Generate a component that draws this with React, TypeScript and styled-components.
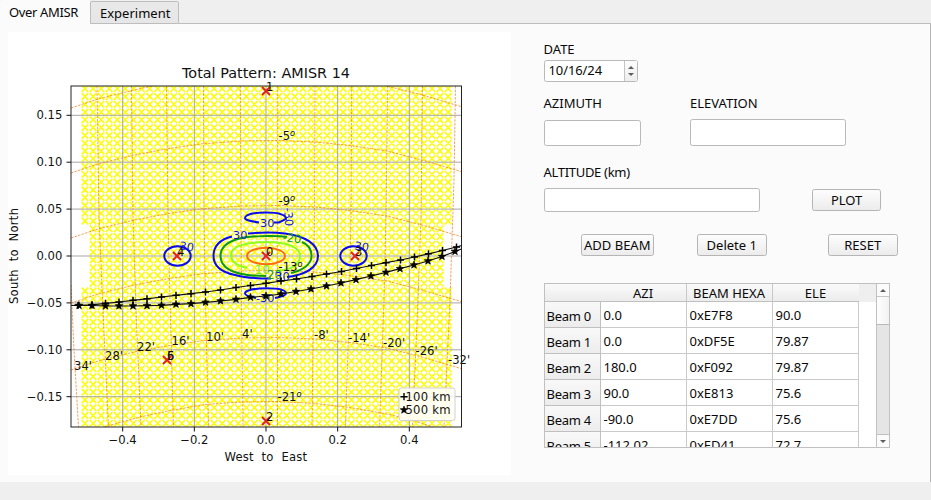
import React from "react";
import styled, { createGlobalStyle } from "styled-components";

const Global = createGlobalStyle`
  *{box-sizing:border-box}
  html,body{margin:0;padding:0;background:#efefef;overflow:hidden}
  body{font-family:"Noto Sans","Open Sans",sans-serif;font-size:13px;color:#080808}
`;

const Window = styled.div`
  width: 931px;
  height: 500px;
  display: flex;
  flex-direction: column;
  background: #efefef;
`;
const TabBar = styled.div`
  display: flex;
  height: 24px;
  flex: none;
  align-items: flex-end;
`;
const Tab = styled.div<{ $active?: boolean }>`
  width: ${(p) => (p.$active ? 90 : 89)}px;
  height: ${(p) => (p.$active ? 24 : 23)}px;
  padding-left: 9px;
  line-height: ${(p) => (p.$active ? 24 : 22)}px;
  letter-spacing: ${(p) => (p.$active ? -0.35 : 0)}px;
  background: ${(p) => (p.$active ? "#fbfbfb" : "linear-gradient(#e9e9e9,#e6e6e6)")};
  border: ${(p) => (p.$active ? "0" : "1px solid #bdbdbd")};
  border-radius: 2px 2px 0 0;
  white-space: nowrap;
`;
const TabRest = styled.div`
  flex: 1;
  align-self: stretch;
  border-bottom: 1px solid #bdbdbd;
`;
const Page = styled.div`
  display: flex;
  height: 458px;
  background: #fbfbfb;
  border-right: 1px solid #b4b4b4;
  padding: 8px 0 0 8px;
`;
const Figure = styled.svg`
  display: block;
  width: 503px;
  height: 443px;
  background: #fff;
  flex: none;
`;
const Controls = styled.div`
  display: flex;
  flex-direction: column;
  margin-left: 32.5px;
  padding-top: 8px;
  width: 360px;
`;
const Row = styled.div<{ $h: number; $mt?: number; $ml?: number }>`
  display: flex;
  align-items: center;
  height: ${(p) => p.$h}px;
  margin-top: ${(p) => p.$mt ?? 0}px;
  margin-left: ${(p) => p.$ml ?? 0}px;
`;
const Txt = styled.span<{ $w?: number; $ls?: number }>`
  display: inline-block;
  width: ${(p) => (p.$w ? p.$w + "px" : "auto")};
  letter-spacing: ${(p) => p.$ls ?? 0}px;
  line-height: 18px;
  white-space: nowrap;
`;
const Field = styled.div<{ $w: number; $h: number; $mr?: number }>`
  width: ${(p) => p.$w}px;
  height: ${(p) => p.$h}px;
  margin-right: ${(p) => p.$mr ?? 0}px;
  background: #fff;
  border: 1px solid #b9b9b9;
  border-radius: 2.5px;
`;
const DateField = styled(Field)`
  display: flex;
  padding-left: 4px;
  justify-content: space-between;
`;
const Spin = styled.div`
  width: 13px;
  border-left: 1px solid #c4c4c4;
  background: linear-gradient(#fcfcfc, #eeeeee);
  display: flex;
  flex-direction: column;
  align-items: center;
  justify-content: center;
  gap: 4px;
`;
const Arrow = styled.i<{ $down?: boolean }>`
  width: 0;
  height: 0;
  border-left: 3px solid transparent;
  border-right: 3px solid transparent;
  ${(p) => (p.$down ? "border-top" : "border-bottom")}: 3.5px solid #5c5c5c;
`;
const Button = styled.div<{ $w: number; $mr?: number }>`
  width: ${(p) => p.$w}px;
  height: 22px;
  margin-right: ${(p) => p.$mr ?? 0}px;
  border: 1px solid #b5b5b5;
  border-radius: 2.5px;
  background: linear-gradient(#fdfdfd, #ececec);
  line-height: 20px;
  text-align: center;
  white-space: nowrap;
`;
const TableBox = styled.div`
  display: flex;
  width: 346px;
  height: 165px;
  margin-top: 27px;
  border: 1px solid #c0c0c0;
  background: #fff;
  overflow: hidden;
`;
const Grid = styled.div`
  width: 314px;
  display: grid;
  grid-template-columns: 56px 86px 86px 86px;
  grid-template-rows: 18px repeat(6, 26px);
  flex: none;
`;
const Head = styled.div<{ $last?: boolean; $first?: boolean }>`
  background: linear-gradient(#fafafa, #ececec);
  border-bottom: 1px solid #c0c0c0;
  border-right: ${(p) => (p.$first || p.$last ? "0" : "1px solid #c8c8c8")};
  text-align: center;
  line-height: 19px;
  white-space: nowrap;
`;
const RowHead = styled.div`
  background: linear-gradient(#f9f9f9, #ececec);
  border-right: 1px solid #c0c0c0;
  border-bottom: 1px solid #c0c0c0;
  padding-left: 2px;
  line-height: 28px;
  letter-spacing: -0.25px;
  white-space: nowrap;
`;
const Cell = styled.div`
  border-right: 1px solid #cacaca;
  border-bottom: 1px solid #cacaca;
  padding-left: 3px;
  line-height: 26px;
`;
const Filler = styled.div`
  flex: 1;
  height: 18px;
  background: #efefef;
`;
const Scroll = styled.div`
  width: 13px;
  display: flex;
  flex-direction: column;
  background: #e5e5e5;
  border-left: 1px solid #c0c0c0;
`;
const ScrollBtn = styled.div`
  height: 12px;
  flex: none;
  display: flex;
  align-items: center;
  justify-content: center;
  background: #fbfbfb;
`;
const Thumb = styled.div`
  height: 29px;
  border-top: 1px solid #c6c6c6;
  border-bottom: 1px solid #b8b8b8;
  background: linear-gradient(90deg, #fefefe, #f2f2f2);
`;
const Track = styled.div`
  flex: 1;
  border-bottom: 1px solid #c0c0c0;
`;

const X = (v: number) => 266 + v * 358.3;
const Y = (v: number) => 256 - v * 938;

const xTicks: [number, string][] = [[-0.4, "−0.4"], [-0.2, "−0.2"], [0, "0.0"], [0.2, "0.2"], [0.4, "0.4"]];
const yTicks: [number, string][] = [
  [0.15, "0.15"], [0.1, "0.10"], [0.05, "0.05"], [0, "0.00"], [-0.05, "−0.05"], [-0.1, "−0.10"], [-0.15, "−0.15"],
];

const meshPath = (() => {
  let d = "";
  for (let i = 0; i <= 45; i++) {
    for (let j = -22; j < 22; j++) {
      const x = 85 + i * 8.07;
      const y = 256 + (j + 0.5) * 7.78;
      if (Math.abs(y - 256) < 32 && (i === 0 || i === 45)) continue;
      d += `M${(x - 3.3).toFixed(1)} ${(y - 3.3).toFixed(1)}l6.6 6.6m0-6.6l-6.6 6.6`;
    }
  }
  return d;
})();

const parallels: number[][][] = [
  [[71, 108], [98, 99], [132, 90.5], [152, 86]],
  [[387, 86], [422, 95], [461, 106.5]],
  ...[173, 238, 303, 370].map((y) => [
    [71, y], [98, y - 9], [132, y - 17.5], [166, y - 24], [200, y - 29], [241, y - 32], [278, y - 32.5],
    [315, y - 31], [350, y - 27.5], [387, y - 22], [422, y - 13], [461, y - 1.5],
  ]),
  [[104, 427], [140, 417], [168, 411], [205, 404.5], [241, 402], [278, 401.5], [315, 403.5], [350, 407.5], [387, 414], [412, 420], [433, 427]],
];
const meridians: number[][][] = [
  [[71, 285], [74, 350], [78.5, 427]],
  [[97, 86], [99, 216], [102.5, 300], [108.5, 427]],
  [[131.5, 86], [133, 216], [136, 310], [141, 427]],
  [[166.5, 86], [168, 216], [170, 300], [173.5, 427]],
  [[203.5, 86], [204, 216], [205.5, 300], [208.5, 427]],
  [[240.3, 86], [241, 216], [241.5, 300], [243, 427]],
  [[277.8, 86], [277.5, 427]],
  [[315, 86], [314.5, 216], [313.5, 300], [312, 427]],
  [[351.7, 86], [351, 216], [349.5, 300], [345.5, 427]],
  [[387.7, 86], [386, 216], [384, 300], [379.5, 427]],
  [[422.5, 86], [421, 216], [418, 300], [412.5, 427]],
  [[455.5, 86], [454, 180], [450, 300], [444, 427]],
];
const pts = (a: number[][]) => a.map((p) => p.join(",")).join(" ");

const plusTrack = [
  [78, 305.3], [92, 304.8], [105.5, 303.3], [119, 302], [133, 300.3], [147, 298.8], [161.5, 297], [176, 295.3], [191, 293.7],
  [205.5, 292], [220.5, 290], [236, 287.5], [250.5, 285.5], [266, 283.3], [281, 281], [296.5, 279], [312, 276.5], [326.5, 274],
  [341.5, 271.5], [356.5, 268.5], [371.5, 265.5], [386, 262.7], [400.5, 260], [414.5, 257], [428.5, 253.8], [442.5, 250.5], [456.5, 247],
];
const starTrack = [
  [79, 305.5], [92, 305.5], [105.5, 306], [119, 306], [133, 306], [147, 305.7], [161.5, 305.3], [176, 304.3], [191, 303.7],
  [205.5, 302.3], [220.5, 301], [236, 299.3], [250.5, 297.3], [266, 296], [281, 294], [296, 291.5], [311, 289], [326.5, 286],
  [341, 283], [356, 279.7], [371, 276], [386, 272.3], [400, 268.7], [414, 265], [428, 261], [442, 256.5], [455, 251.5],
];
const star = (cx: number, cy: number) =>
  Array.from({ length: 10 }, (_, k) => {
    const r = k % 2 ? 1.7 : 4;
    const a = (Math.PI / 5) * k - Math.PI / 2;
    return `${(cx + r * Math.cos(a)).toFixed(1)},${(cy + r * Math.sin(a)).toFixed(1)}`;
  }).join(" ");
const plus = (x: number, y: number) => `M${x - 3.6} ${y}h7.2M${x} ${y - 3.6}v7.2`;

type Label = [string, number, number];
const raLabels: Label[] = [
  ["34'", 74, 370], ["28'", 105, 359.5], ["22'", 137, 351], ["16'", 171.5, 345], ["10'", 206, 340.5], ["4'", 242, 337.5],
  ["-8'", 314, 338.5], ["-14'", 348, 342], ["-20'", 383, 347], ["-26'", 415.5, 355], ["-32'", 448, 364],
  ["-5º", 278.5, 140], ["-9º", 278.5, 205], ["-13º", 278.5, 271], ["-21º", 277.5, 401],
];
const beams: [number, number, string[]][] = [
  [266, 91, ["1"]], [266, 421, ["2"]], [177, 256, ["4"]], [355, 256, ["3"]], [167, 360, ["5", "6"]], [266, 256, ["0"]],
];

function Chart() {
  return (
    <Figure viewBox="8 32 503 443" fontFamily="DejaVu Sans" fontSize="11.6" fill="#111">
      <defs>
        <clipPath id="axes"><rect x="71" y="86" width="390.5" height="341" /></clipPath>
      </defs>
      <text x="182" y="77.5" fontSize="14" textLength="168" lengthAdjust="spacingAndGlyphs">Total Pattern: AMISR 14</text>
      <g clipPath="url(#axes)">
        <path d={meshPath} stroke="#fcfc14" strokeWidth="1.7" />
        <g stroke="#a6a6a6" strokeWidth="1">
          {xTicks.map(([v]) => <path key={v} d={`M${X(v)} 86V427`} />)}
          {yTicks.map(([v]) => <path key={v} d={`M71 ${Y(v)}H461.5`} />)}
        </g>
        <g fill="none" stroke="#f27a18" strokeWidth=".7" strokeDasharray="2.5 1.2">
          {[...parallels, ...meridians].map((l, i) => <polyline key={i} points={pts(l)} />)}
        </g>
        <g fill="none" stroke="#0a0aef" strokeWidth="2">
          <ellipse cx="177.5" cy="256" rx="13.2" ry="9.7" />
          <ellipse cx="353.5" cy="256" rx="13.2" ry="9.7" />
          <path d="M232 236.5C218 240 213.5 248 213.5 256C213.5 267 223 272.5 235 275C247 278.5 259 278.5 271 278.5M287 277C306 275 318 267 318 256C318 244 305 236 285 233.5C272 232 260 232.5 248 233.5" />
          <path d="M259 222.5C250 221 245 220 245 218C245 214 256 212.5 266 212.5C279 212.5 286 214.5 286 219L279 222.5H274" />
          <path d="M256 298C248 296.5 245 295 245 293.5C245 290 256 288.3 266 288.3C279 288.3 286 290 286 293.5C286 295.5 280 297 275 298" />
        </g>
        <path d="M287 237C276 235.5 248 235.5 238 239C227 242 220.5 248 220.5 256C220.5 269 235 276 266 276M291 273C303 270 311.5 264 311.5 256C311.5 248 307 244 302 242" fill="none" stroke="#0b9b12" strokeWidth="2" />
        <path d="M247 268C234 265 231 260 231 255C231 246 247 242 266 242C287 242 300 247 300 256C300 266 289 270 276 271" fill="none" stroke="#8dff20" strokeWidth="2" />
        <ellipse cx="266" cy="256" rx="19" ry="8.3" fill="none" stroke="#ff6a13" strokeWidth="2" />
        <g fill="#1414d8" fontSize="11.3">
          <text x="233" y="238.5">30</text><text x="260" y="227">30</text><text x="256" y="302">-30</text>
          <text x="175" y="249" transform="rotate(8 175 249)">-30</text><text x="350" y="249" transform="rotate(8 350 249)">-30</text>
          <text transform="translate(284 208) rotate(86)">-30</text>
        </g>
        <text x="282" y="241" fill="#0b9b12" transform="rotate(8 282 241)">-20</text>
        <text x="255" y="274" fill="#7dea20">10</text>
        <text x="267" y="279" fill="#14924b">20</text>
        <text x="275" y="281" fill="#1414d8">30</text>
        <g stroke="#e32222" strokeWidth="2">
          {beams.map(([x, y]) => <path key={`${x}-${y}`} d={`M${x - 4} ${y - 4}l8 8m0-8l-8 8`} />)}
        </g>
        <g fill="none" stroke="#111" strokeWidth="1.2">
          <polyline points={pts([[71, 305.5], ...plusTrack, [461.5, 245.5]])} />
          <polyline points={pts([[71, 305.5], ...starTrack, [461.5, 249]])} />
        </g>
        <path d={plusTrack.map(([x, y]) => plus(x, y)).join("")} stroke="#000" strokeWidth="1.5" />
        {starTrack.map(([x, y]) => <polygon key={x} points={star(x, y)} fill="#000" stroke="#000" strokeWidth=".6" />)}
      </g>
      {beams.map(([x, y, names]) => names.map((n) => <text key={n} x={x} y={y}>{n}</text>))}
      {raLabels.map(([t, x, y]) =>
        t.endsWith("º") ? (
          <text key={t} x={x} y={y}>{t.slice(0, -1)}<tspan fontSize="8.3" fontStyle="italic" dy="-4">o</tspan></text>
        ) : (
          <text key={t} x={x} y={y}>{t}</text>
        )
      )}
      <rect x="71" y="86" width="390.5" height="341" fill="none" stroke="#222" />
      {xTicks.map(([v, t]) => (
        <g key={t}>
          <path d={`M${X(v)} 427v4.5`} stroke="#111" />
          <text x={X(v)} y="443.6" textAnchor="middle">{t}</text>
        </g>
      ))}
      {yTicks.map(([v, t]) => (
        <g key={t}>
          <path d={`M71 ${Y(v)}h-4.5`} stroke="#111" />
          <text x="62.3" y={Y(v) + 4} textAnchor="end">{t}</text>
        </g>
      ))}
      <text x="224.5" y="461" xmlSpace="preserve" textLength="82.5">West  to  East</text>
      <text transform="translate(17.5 304) rotate(-90)" xmlSpace="preserve" textLength="96">South  to  North</text>
      <rect x="399" y="388" width="56" height="32.5" rx="2.5" fill="#fff" fillOpacity=".85" stroke="#d0d0d0" />
      <path d={plus(404, 396.7)} stroke="#000" strokeWidth="1.4" />
      <polygon points={star(404, 410)} fill="#000" stroke="#000" strokeWidth=".6" />
      <text x="405.5" y="400.7" textLength="45">100 km</text>
      <text x="405.5" y="413.7" textLength="45">500 km</text>
    </Figure>
  );
}

const rows = [
  ["Beam 0", "0.0", "0xE7F8", "90.0"],
  ["Beam 1", "0.0", "0xDF5E", "79.87"],
  ["Beam 2", "180.0", "0xF092", "79.87"],
  ["Beam 3", "90.0", "0xE813", "75.6"],
  ["Beam 4", "-90.0", "0xE7DD", "75.6"],
  ["Beam 5", "-112.02", "0xED41", "72.7"],
];

export default function App() {
  return (
    <Window>
      <Global />
      <TabBar>
        <Tab $active>Over AMISR</Tab>
        <Tab>Experiment</Tab>
        <TabRest />
      </TabBar>
      <Page>
        <Chart />
        <Controls>
          <Row $h={18}><Txt>DATE</Txt></Row>
          <Row $h={22} $mt={2}>
            <DateField $w={94.5} $h={22}><Txt $ls={-0.1}>10/16/24</Txt><Spin><Arrow /><Arrow $down /></Spin></DateField>
          </Row>
          <Row $h={18} $mt={12}><Txt $w={146.5}>AZIMUTH</Txt><Txt>ELEVATION</Txt></Row>
          <Row $h={27} $mt={7}><Field $w={97.4} $h={26} $mr={49} /><Field $w={156.5} $h={27} /></Row>
          <Row $h={18} $mt={17}><Txt $ls={-0.3}>ALTITUDE (km)</Txt></Row>
          <Row $h={24} $mt={7}><Field $w={216.4} $h={24} $mr={52} /><Button $w={69.5}>PLOT</Button></Row>
          <Row $h={22} $mt={22} $ml={37}>
            <Button $w={73.5} $mr={43}>ADD BEAM</Button>
            <Button $w={69.5} $mr={61.5}>Delete 1</Button>
            <Button $w={69.5}>RESET</Button>
          </Row>
          <TableBox>
            <Grid>
              <Head $first />
              <Head>AZI</Head>
              <Head>BEAM HEXA</Head>
              <Head $last>ELE</Head>
              {rows.map((r) => (
                <React.Fragment key={r[0]}>
                  <RowHead>{r[0]}</RowHead>
                  {r.slice(1).map((c, i) => <Cell key={i}>{c}</Cell>)}
                </React.Fragment>
              ))}
            </Grid>
            <Filler />
            <Scroll>
              <ScrollBtn><Arrow /></ScrollBtn>
              <Thumb />
              <Track />
              <ScrollBtn><Arrow $down /></ScrollBtn>
            </Scroll>
          </TableBox>
        </Controls>
      </Page>
    </Window>
  );
}
